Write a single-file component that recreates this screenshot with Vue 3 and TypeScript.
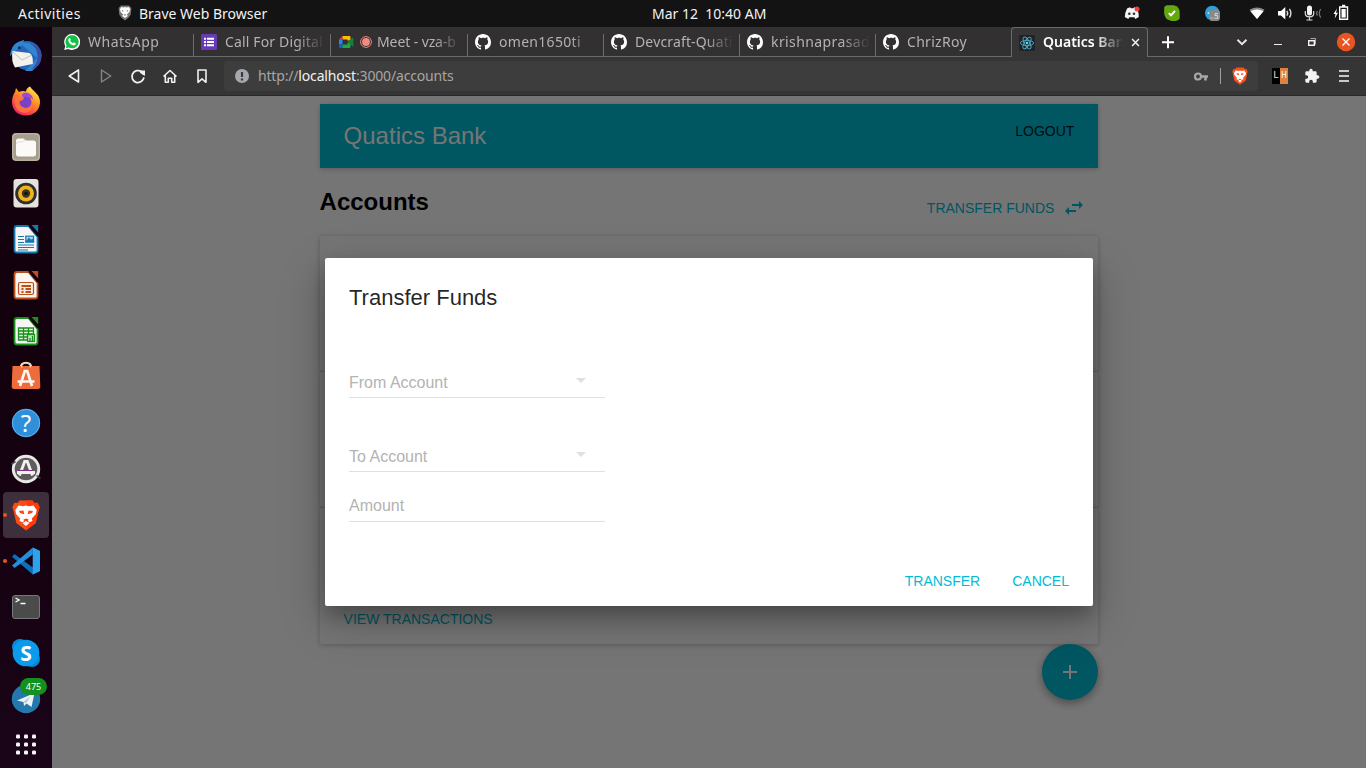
<script setup lang="ts">
interface Tab {
  title: string
  icon: 'whatsapp' | 'forms' | 'meet' | 'github'
  spacing: number
  recording?: boolean
}

const tabs: Tab[] = [
  { title: 'WhatsApp', icon: 'whatsapp', spacing: 0.5 },
  { title: 'Call For Digital', icon: 'forms', spacing: 0.15 },
  { title: 'Meet - vza-b', icon: 'meet', spacing: -0.1, recording: true },
  { title: 'omen1650ti', icon: 'github', spacing: 0.3 },
  { title: 'Devcraft-Quati', icon: 'github', spacing: 0.15 },
  { title: 'krishnaprasad', icon: 'github', spacing: 0.4 },
  { title: 'ChrizRoy', icon: 'github', spacing: 0.3 },
]

const documents = [
  { name: 'writer', color: '#1477b0', light: '#4aa3d6' },
  { name: 'impress', color: '#b8501c', light: '#d9743c' },
  { name: 'calc', color: '#18901a', light: '#3fb83a' },
]
</script>

<template>
  <div class="desktop">
    <header class="topbar">
      <span class="activities">Activities</span>
      <svg class="top-brave" viewBox="0 0 14 16" width="14" height="16">
        <path d="M3 .5h8l2.4 2.6-.7 6.7L10.200 13 7 15.600 3.800 13 1.300 9.800.6 3.100z" fill="#777" />
        <path d="M3.300 2l2.200.5L7 2l1.500.5L10.700 2l1.500 2.300-1 3L8.800 9.500l1 1.400L7 13l-2.800-2.100 1-1.400L2.800 7.300l-1-3z" fill="#fff" />
        <path d="M3.500 5l2 .7-.7 1zM10.500 5l-2 .7.7 1zM5.500 9L7 9.700 8.500 9 7 11z" fill="#555" />
      </svg>
      <span class="app-name">Brave Web Browser</span>
      <span class="clock">Mar 12&nbsp; 10:40 AM</span>
      <svg class="tray" viewBox="1120 0 240 27" width="240" height="27">
        <path d="M1127 8.500l3-1.200 1 1h2.200l1-1 2.800 1.200q2 4.500 1.800 8.500l-3.500 2-1-1.700h-5l-1 1.700-3.500-2q.2-4.500 2.200-8.500z" fill="#f4f4f4" />
        <circle cx="1129.300" cy="13.800" r="1.300" fill="#333" /><circle cx="1134" cy="13.800" r="1.300" fill="#333" />
        <circle cx="1137" cy="9" r="2.500" fill="#f04040" />
        <path d="M1167 5.200h7q5.500 1.500 5.700 7v6q-1 2.700-4 2.700h-4q-7-1-7.500-7.700V7.500q.5-2 2.800-2.300z" fill="#64a80f" />
        <path d="M1168.800 13.200l2.200 2.200 4-4.500" fill="none" stroke="#fff" stroke-width="1.900" />
        <circle cx="1212.300" cy="13" r="7.300" fill="#2d9fdb" />
        <path d="M1207 13l3-1.500v3z" fill="#e8f4fb" />
        <rect x="1209" y="10" width="11" height="11" rx="3" fill="#87898b" />
        <path d="M1210.500 18h1.200m.8 0h1.200M1218 13.600h-3v2h2.700v2.700h-3" stroke="#d5d5d5" fill="none" />
        <path d="M1249.500 9.800q7.500-4.800 15 0l-7.500 9.200z" fill="#888" />
        <path d="M1250.500 11.200q6.500-3.600 13 0l-6.500 7.800z" fill="#fff" />
        <path d="M1278 11h3l4.300-4v12.500l-4.300-4h-3z" fill="#fff" />
        <path d="M1286.800 10.800q1.800 2.400 0 4.800M1289.400 8.800q3 4.400 0 8.800" stroke="#d9d9d9" stroke-width="1.400" fill="none" />
        <rect x="1307" y="5.500" width="5" height="10" rx="2.500" fill="#f4f4f4" />
        <path d="M1305.300 11v2.500q0 3.400 4.200 3.400t4.200-3.400V11M1309.500 17v3M1306.500 20h6" stroke="#ddd" stroke-width="1.200" fill="none" />
        <path d="M1317.500 11q-1.800 2.300 0 4.600M1320.700 9q-2.800 4.300 0 8.600" stroke="#777" stroke-width="1.200" fill="none" />
        <path d="M1337 8.500l-3.500 5.500h2l-.8 4.500 3.300-5.800h-2z" fill="#fff" />
        <path d="M1339.700 7h7.800v12.300h-7.800zM1342 5.500h3.200" fill="none" stroke="#fff" stroke-width="1.400" />
        <rect x="1341.500" y="9" width="4.200" height="8.600" fill="#fff" />
      </svg>
    </header>

    <div class="workspace">
      <nav class="dock">
        <div class="dock-item">
          <svg viewBox="0 0 32 32">
            <circle cx="17" cy="16.500" r="14.500" fill="#2565b7" />
            <path d="M0 17Q1 6 8 3q4-1.600 6-2 0 2-1 2.500Q25 3 29 13q4 11-7 19h-7l12-13L12 6z" fill="#2f85cf" />
            <path d="M20 5q8 3 7.500 14-1 8-7 12 12-3 11-16-2-9-11.500-10z" fill="#3c4ba6" />
            <path d="M2.500 12l17 2q4 2.500 3.300 11L5 28.500Q1 23 2.500 12z" fill="#f3f1ed" />
            <path d="M3 13l9 8 10-5" fill="none" stroke="#c4c0ba" />
            <circle cx="9.300" cy="8.800" r="1.400" fill="#14294c" />
          </svg>
        </div>
        <div class="dock-item">
          <svg viewBox="0 0 32 32">
            <defs>
              <linearGradient id="fox" x1=".8" y1="0" x2=".2" y2="1">
                <stop offset="0" stop-color="#fff14d" /><stop offset=".4" stop-color="#ff9324" />
                <stop offset=".7" stop-color="#ff4b43" /><stop offset="1" stop-color="#ed1976" />
              </linearGradient>
            </defs>
            <path d="M20 1.500q2 3 5 5.500 5.500 5 5 11Q28.500 29.700 16 30.500 3.500 30 2 18q0-7 3-11l1-4 3 4q3-1.500 7-.5 0-3 4-5z" fill="url(#fox)" />
            <circle cx="15.500" cy="17" r="6" fill="#7942c9" />
            <path d="M12 9q4-3 8 0 3 2 3 6-1-2-3-2-4-3-8-1z" fill="#9c4bd7" />
            <path d="M5 9q3 .5 4 3h5l-1 3-4 1.500q0 5 6 6.500 6 0 8-5 0 9-8 10Q5 27 4.500 17z" fill="#ff7139" />
          </svg>
        </div>
        <div class="dock-item">
          <svg viewBox="0 0 32 32">
            <rect x="2" y="2" width="28" height="28" rx="4" fill="#a59e8c" />
            <rect x="2.800" y="2.800" width="26.400" height="26.400" rx="3.500" fill="none" stroke="#c2bcac" />
            <path d="M6 10q0-2.500 2.500-2.500h5L16 9.500h7.500q2.500 0 2.500 2.500v11q0 2.500-2.500 2.500h-15Q6 25.500 6 23z" fill="#fbfaf8" />
            <path d="M6.500 13q0-2 2-2H12l3-1.700" fill="none" stroke="#dedbd3" />
          </svg>
        </div>
        <div class="dock-item">
          <svg viewBox="0 0 32 32">
            <rect x="3.500" y="2" width="25" height="28.500" rx="3" fill="#e6e2dc" />
            <circle cx="16" cy="16.500" r="10.800" fill="#302e32" />
            <circle cx="16" cy="16.500" r="8" fill="#eeb41b" />
            <circle cx="16" cy="16.500" r="4.200" fill="#3c3422" />
            <circle cx="16" cy="16.500" r="1.800" fill="#111" />
          </svg>
        </div>
        <div v-for="doc in documents" :key="doc.name" class="dock-item">
          <svg viewBox="0 0 32 32">
            <path d="M7 3h11.500L27.500 14v13q0 2.500-2.500 2.500H7q-2.500 0-2.500-2.500V5.500Q4.500 3 7 3z" fill="#f7f6f5" :stroke="doc.color" stroke-width="1.800" />
            <path d="M19 2l9.500 11" stroke="#15010f" stroke-width="2.200" />
            <path d="M21.500 2h6.700v7.500z" :fill="doc.color" />
            <g v-if="doc.name === 'writer'" :stroke="doc.color" stroke-width="1.200">
              <path d="M8 13.500h6M8 16.500h6M8 19.500h6M8 22h16M8 24.500h16M8 27h10" />
              <rect x="15.800" y="13.200" width="7.800" height="6" fill="#a9d7f2" />
              <path d="M16.500 18.500l2.500-3 2 2 1.500-1 1 2z" :fill="doc.color" />
            </g>
            <g v-else-if="doc.name === 'impress'" :stroke="doc.color">
              <rect x="8.500" y="13.500" width="15" height="12" rx="1.500" fill="#fbeadf" stroke-width="1.200" />
              <path d="M11.500 17h9.500M11.500 20h2M15.500 20H21M11.500 23h2M15.500 23H21" stroke-width="1.900" />
            </g>
            <g v-else :stroke="doc.color" stroke-width="1.300">
              <path d="M8.500 13h15v12h-15zM8.500 16h15M8.500 19h15M8.500 22h15M13.500 13v12M18.500 13v12" fill="#e2f3df" />
              <rect x="17.500" y="19.500" width="7" height="7" fill="#bde4b7" />
              <path d="M20 26v-3M22.500 26v-5" />
            </g>
          </svg>
        </div>
        <div class="dock-item">
          <svg viewBox="0 0 32 32">
            <path d="M10.500 7q0-5.500 5.500-5.500T21.500 7" fill="none" stroke="#eadbb6" stroke-width="1.700" />
            <path d="M2.500 5h27l.8 20.500q0 2.500-2.500 2.500H4.200q-2.500 0-2.500-2.500z" fill="#ee6b3b" />
            <path d="M11.500 6.500q0-4.300 4.500-4.300t4.500 4.300" fill="none" stroke="#eadbb6" stroke-width="1.300" />
            <path d="M10 25l4.800-15h2.400L22 25M7.500 20.500h17" fill="none" stroke="#fff6f0" stroke-width="2.700" />
          </svg>
        </div>
        <div class="dock-item">
          <svg viewBox="0 0 32 32">
            <circle cx="16" cy="16" r="14.200" fill="#2f8fd8" />
            <circle cx="16" cy="16" r="13.600" fill="none" stroke="#62b2ec" />
            <text x="16" y="24.500" class="help-mark">?</text>
          </svg>
        </div>
        <div class="dock-item">
          <svg viewBox="0 0 32 32">
            <circle cx="16" cy="16" r="14.200" fill="#e8e8e8" />
            <circle cx="16" cy="16" r="11.300" fill="#5d5d5d" />
            <path d="M1.500 11l4-2.500M26.500 22.500l4 3" stroke="#444" stroke-width="1.500" />
            <path d="M9.500 22.500l5.200-14h2.600l5.200 14M7 19.500h18" fill="none" stroke="#f0f0f0" stroke-width="2.900" />
            <path d="M8 17.500h15" stroke="#7b2f7e" />
          </svg>
        </div>
        <div class="dock-item active">
          <i class="running"></i>
          <svg viewBox="0 0 32 32">
            <path d="M9.500 1.500h13l2 2.500 3-.3 2.200 4.600-1 2.700-3 13L16 31.500 6.300 24l-3-13-1-2.700 2.200-4.600 3 .3z" fill="#fb4c16" />
            <path d="M16 1.500h6.500l2 2.500 3-.3 2.200 4.600-1 2.700-3 13L16 31.500z" fill="#ff3c0a" />
            <path d="M8.500 6.500l4.500.8 3-.8 3 .8 4.500-.8 3.200 4.500-.8 4-4 4.500.5 2.500-3 1.200-1.400-1.200.5-1.500L16 19.500l-2.500 1 .5 1.500-1.400 1.200-3-1.200.5-2.500-4-4.500-.8-4z" fill="#fff" />
            <path d="M9 12l4.500-.5.8 3.800L10 14zM23 12l-4.500-.5-.8 3.800L22 14z" fill="#fb4614" />
            <path d="M16 22l3.500 2L16 27l-3.500-3z" fill="#fff" />
          </svg>
        </div>
        <div class="dock-item">
          <i class="running"></i>
          <svg viewBox="0 0 32 32">
            <path d="M22.800 2.500L30 6v20l-7.200 3.500L2 11.800 4.500 9l18.300 13.500z" fill="#0d6fba" />
            <path d="M22.800 2.500v7L4.500 23 2 20.500z" fill="#2490dc" />
            <path d="M22.800 2.500L30 6v20l-7.200 3.500z" fill="#2ea2ec" />
          </svg>
        </div>
        <div class="dock-item">
          <svg viewBox="0 0 32 32">
            <rect x="2.500" y="4.500" width="27" height="23" rx="2.500" fill="#4b4b4b" stroke="#777" />
            <path d="M5.500 7l3.600 2L5.500 11M10.500 12.500h5" fill="none" stroke="#fff" stroke-width="1.300" />
          </svg>
        </div>
        <div class="dock-item">
          <svg viewBox="0 0 32 32">
            <circle cx="10" cy="10" r="8" fill="#0a8ad8" /><circle cx="22" cy="22" r="8" fill="#0884d8" />
            <circle cx="16" cy="16" r="13.300" fill="#0b9bec" />
            <text x="16" y="23.500" class="skype-letter">S</text>
          </svg>
        </div>
        <div class="dock-item">
          <svg viewBox="0 0 32 32">
            <circle cx="16" cy="16" r="14.200" fill="#2478ae" />
            <path d="M7 17.500L24.500 10l-3 14-5-3.500-2.500 2.500-.5-4z" fill="#eef3f6" />
            <path d="M13.500 19l7-6-4.500 7z" fill="#abc8da" />
          </svg>
          <span class="badge">475</span>
        </div>
        <div class="dock-item">
          <svg viewBox="0 0 32 32" fill="#f4f2f4">
            <g v-for="row in 3" :key="row">
              <rect v-for="col in 3" :key="col" :x="col * 8 - 2" :y="row * 8 - 2.500" width="4" height="4" rx="1.200" />
            </g>
          </svg>
        </div>
      </nav>

      <main class="browser">
        <div class="tabstrip">
          <div v-for="tab in tabs" :key="tab.title" class="tab">
            <svg v-if="tab.icon === 'whatsapp'" viewBox="0 0 16 16" class="favicon">
              <path d="M.2 16L1.300 12A8 8 0 1 1 4.300 14.900z" fill="#fff" />
              <path d="M1.800 14.300l.8-2.800a6.600 6.600 0 1 1 2.200 2z" fill="#14c148" />
              <path d="M5 4.200q.9-.7 1.300.3l.5 1.200-.7 1q1 1.900 2.900 2.600l.8-1 1.900.9q.2 1.700-1.700 2.200Q5.800 11.200 4.300 6.700 4.200 5 5 4.200z" fill="#fff" />
            </svg>
            <svg v-else-if="tab.icon === 'forms'" viewBox="0 0 16 16" class="favicon">
              <rect width="16" height="16" rx="1" fill="#673ab7" />
              <path d="M3 4.800h2M6 4.800h7M3 8h2M6 8h7M3 11.200h2M6 11.200h7" stroke="#fff" stroke-width="2" />
            </svg>
            <svg v-else-if="tab.icon === 'meet'" viewBox="0 0 16 16" class="favicon">
              <path d="M4.500 2h7q1 0 1 1v3.500h-3V5.500h-5z" fill="#fbbc04" />
              <path d="M4.500 2v3.500H1z" fill="#ea4335" />
              <path d="M1 5.500h3.500v5H1z" fill="#2684fc" /><path d="M1 10.500h3.500V14H2q-1 0-1-1z" fill="#0066da" />
              <path d="M4.500 10.500h5V9l3-2.500V13q0 1-1 1h-7z" fill="#20a849" />
              <path d="M9.500 8l5-4.300q.9-.4.9.4v7.800q0 .8-.9.400z" fill="#16803a" />
            </svg>
            <svg v-else viewBox="0 0 16 16" class="favicon" fill="#fff">
              <path d="M8 0C3.580 0 0 3.580 0 8c0 3.540 2.290 6.530 5.470 7.590.4.070.55-.17.55-.38 0-.19-.01-.82-.01-1.490-2.010.37-2.530-.49-2.690-.94-.09-.23-.48-.94-.82-1.130-.28-.15-.68-.52-.01-.53.63-.01 1.080.58 1.230.82.72 1.210 1.870.87 2.330.66.070-.52.28-.87.51-1.070-1.780-.2-3.640-.89-3.640-3.950 0-.87.31-1.590.82-2.150-.08-.2-.36-1.020.08-2.120 0 0 .67-.21 2.200.82.64-.18 1.320-.27 2-.27s1.360.09 2 .27c1.530-1.040 2.200-.82 2.200-.82.44 1.100.16 1.920.08 2.120.51.56.82 1.270.82 2.150 0 3.070-1.870 3.750-3.650 3.950.29.25.54.73.54 1.480 0 1.070-.01 1.930-.01 2.200 0 .21.15.46.55.38A8.010 8.010 0 0 0 16 8c0-4.420-3.580-8-8-8z" />
            </svg>
            <svg v-if="tab.recording" class="recording" viewBox="0 0 12 12">
              <circle cx="6" cy="6" r="5.400" fill="none" stroke="#e98a80" /><circle cx="6" cy="6" r="3.900" fill="#f28b82" />
            </svg>
            <span class="tab-title" :style="{ letterSpacing: tab.spacing + 'px' }">{{ tab.title }}</span>
          </div>
          <div class="tab current">
            <svg viewBox="0 0 16 16" class="favicon">
              <rect width="16" height="16" rx="1" fill="#20232a" />
              <g fill="none" stroke="#4fa9c4" stroke-width=".9">
                <ellipse cx="8" cy="8" rx="6.600" ry="2.600" />
                <ellipse cx="8" cy="8" rx="6.600" ry="2.600" transform="rotate(60 8 8)" />
                <ellipse cx="8" cy="8" rx="6.600" ry="2.600" transform="rotate(120 8 8)" />
              </g>
              <circle cx="8" cy="8" r="1.300" fill="#61dafb" />
            </svg>
            <span class="tab-title">Quatics Ban</span>
            <svg class="close" viewBox="0 0 10 10"><path d="M1.200 1.200l7.600 7.600M8.800 1.200L1.200 8.800" stroke="#f2f2f2" stroke-width="1.700" /></svg>
          </div>
          <svg class="window-controls" viewBox="1148 27 218 29" width="218" height="29">
            <path d="M1162 42.200h12M1168 36.200v12" stroke="#fff" stroke-width="2" />
            <path d="M1237.500 39.800l4.500 4.300 4.500-4.300" fill="none" stroke="#e8e8e8" stroke-width="1.900" />
            <path d="M1274 44.500h8" stroke="#eee" />
            <path d="M1308.700 40.700h5.600v4.600h-5.600z" fill="none" stroke="#f2f2f2" stroke-width="1.400" />
            <path d="M1310.500 38.500h5v6" fill="none" stroke="#aaa" />
            <circle cx="1346" cy="42" r="9.200" fill="#e95420" />
            <path d="M1342.500 38.500l7 7M1349.500 38.500l-7 7" stroke="#fff" stroke-width="1.400" />
          </svg>
        </div>

        <div class="toolbar">
          <svg class="nav-icons" viewBox="52 57 172 38" width="172" height="38" fill="none" stroke="#f0f0f0" stroke-width="1.600" stroke-linejoin="round">
            <path d="M78.500 70v12l-9.300-6z" />
            <path d="M101.500 70v12l9.300-6z" stroke="#858585" stroke-width="1.400" />
            <path d="M141.600 71.800a6 6 0 1 0 2.300 5.500" stroke-width="1.800" /><path d="M140 70.500h5v5.200l-2.300-1-2.700-2z" fill="#f0f0f0" stroke="none" />
            <path d="M163.500 76.500l6.500-6 6.500 6M165.300 75.500v6.700h3v-4h3.400v4h3v-6.700" />
            <path d="M198 70h8v12.300l-4-3.500-4 3.500z" />
          </svg>
          <div class="address">
            <svg class="info" viewBox="0 0 14 14"><circle cx="7" cy="7" r="7" fill="#a5a9ad" /><path d="M7 3v5M7 9.500v2" stroke="#3b3b3b" stroke-width="2.200" /></svg>
            <span class="url">http://<b>localhost</b>:3000/accounts</span>
            <svg class="key" viewBox="0 0 14 9"><circle cx="4" cy="4.500" r="3" fill="none" stroke="#a8a8a8" stroke-width="2.200" /><path d="M7 4.500h7M11.500 4.500v4" stroke="#a8a8a8" stroke-width="2.600" /></svg>
            <i class="divider"></i>
            <svg class="shield" viewBox="0 0 16 18">
              <path d="M4.500.5h7L13 2l1.800.3.9 2.500-.4 1.200-1.500 7.500L8 17.700l-5.800-4.200L.7 6 .3 4.800l.9-2.500L3 2z" fill="#f4501c" />
              <path d="M3.800 3.500l2.700.5L8 3.500l1.500.5 2.700-.5L14 6l-.5 2.200-2.300 2.500.3 1.600-1.600.7-1-.7L8 11.500l-.9.800-1 .7-1.600-.7.3-1.600L2.500 8.200 2 6zM8 12.700l2 1-2 1.800-2-1.800z" fill="#fff" />
              <path d="M4.500 6.500L6.700 6.300l.3 2L5.200 7.800zM11.500 6.500l-2.200-.2-.3 2 1.800-.5z" fill="#f4501c" />
            </svg>
          </div>
          <div class="lh"><span>L</span><span>H</span></div>
          <svg class="puzzle" viewBox="0 0 24 24" fill="#f3f3f3"><path d="M20.500 11H19V7c0-1.100-.9-2-2-2h-4V3.500C13 2.120 11.880 1 10.500 1S8 2.120 8 3.500V5H4c-1.100 0-1.990.9-1.990 2v3.800H3.500c1.490 0 2.700 1.210 2.700 2.700s-1.210 2.700-2.700 2.700H2V20c0 1.100.9 2 2 2h3.800v-1.500c0-1.490 1.210-2.700 2.700-2.700s2.700 1.210 2.700 2.700V22H17c1.100 0 2-.9 2-2v-4h1.500c1.380 0 2.500-1.120 2.500-2.500S21.880 11 20.500 11z" /></svg>
          <svg class="burger" viewBox="0 0 10 12"><path d="M0 1h10M0 6h10M0 11h10" stroke="#c9c9c9" stroke-width="1.800" /></svg>
        </div>

        <section class="page">
          <div class="container">
            <div class="appbar">
              <h1>Quatics Bank</h1>
              <button class="flat logout">Logout</button>
            </div>
            <div class="heading">
              <h2>Accounts</h2>
              <button class="flat transfer-link">
                Transfer Funds
                <svg viewBox="0 0 24 24" width="24" height="24"><path d="M6.990 11L3 15l3.990 4v-3H14v-2H6.990v-3zM21 9l-3.990-4v3H10v2h7.010v3L21 9z" fill="#00bcd4" /></svg>
              </button>
            </div>
            <div class="card"></div>
            <div class="card"></div>
            <div class="card last"><button class="flat">View Transactions</button></div>
            <button class="fab"><svg viewBox="0 0 24 24" width="24" height="24"><path d="M19 13h-6v6h-2v-6H5v-2h6V5h2v6h6v2z" fill="#fff" /></svg></button>
          </div>

          <div class="overlay">
            <div class="dialog">
              <h3>Transfer Funds</h3>
              <div class="field from"><span>From Account</span><i class="caret"></i></div>
              <div class="field to"><span>To Account</span><i class="caret"></i></div>
              <div class="field amount"><span>Amount</span></div>
              <div class="actions">
                <button class="flat">Transfer</button>
                <button class="flat">Cancel</button>
              </div>
            </div>
          </div>
        </section>
      </main>
    </div>
  </div>
</template>

<style>
html, body { margin: 0; overflow: hidden; }
</style>

<style scoped>
* { box-sizing: border-box; }
.desktop { width: 1366px; height: 768px; display: flex; flex-direction: column; overflow: hidden; font-family: "Noto Sans", "Open Sans", sans-serif; }
svg { display: block; flex: none; }
span { white-space: pre; }

.topbar { height: 27px; flex: none; display: grid; grid-template-columns: 118px 21px 513px 468px 240px; align-items: center; background: #131313; color: #f2f2f2; font-size: 14px; line-height: 26px; }
.activities { padding-left: 18px; letter-spacing: .45px; }
.top-brave { margin-top: -2px; }

.workspace { flex: 1; display: flex; min-height: 0; }
.dock { width: 52px; flex: none; padding-top: 5px; background: linear-gradient(#12010e, #15010f 60%, #1a0418); }
.dock-item { width: 46px; height: 46px; margin-left: 3px; border-radius: 4px; display: flex; align-items: center; justify-content: center; position: relative; }
.dock-item svg { width: 32px; height: 32px; }
.dock-item.active { background: #3d2f3b; }
.running { position: absolute; left: 0; top: 21px; width: 4px; height: 4px; border-radius: 50%; background: #e95420; }
.badge { position: absolute; left: 17px; top: 2px; width: 27px; height: 17px; border-radius: 9px; background: #12911f; color: #fff; font-size: 9px; line-height: 17px; text-align: center; }
.help-mark { font: 24px "Noto Sans", sans-serif; fill: #fff; text-anchor: middle; }
.skype-letter { font: bold 21px "Noto Sans", sans-serif; fill: #fff; text-anchor: middle; }

.browser { flex: 1; display: flex; flex-direction: column; min-width: 0; }
.tabstrip { height: 30px; flex: none; display: flex; background: #333031; border-bottom: 1px solid #696b6b; padding-left: 5px; }
.tab { width: 136px; flex: none; display: flex; align-items: center; padding: 0 6px 0 7px; position: relative; color: #b3b3b3; font-size: 14px; }
.tab:nth-child(-n+3) { width: 137px; }
.tab:not(.current)::after { content: ""; position: absolute; right: 0; top: 7px; bottom: 0; width: 1px; background: #6d6d6d; }
.tab:nth-child(7)::after { display: none; }
.favicon { width: 16px; height: 16px; }
.recording { width: 12px; height: 12px; margin-left: 6px; }
.tab-title { flex: 1; min-width: 0; margin-left: 8px; overflow: hidden; -webkit-mask-image: linear-gradient(90deg, #000 calc(100% - 28px), transparent); mask-image: linear-gradient(90deg, #000 calc(100% - 28px), transparent); line-height: 22px; }
.recording + .tab-title { margin-left: 5px; }
.tab.current { width: 137px; height: 30px; margin: 0 0 -1px -1px; background: #353535; border: 1px solid #696b6b; border-bottom: 0; border-radius: 4px 4px 0 0; color: #fff; font-weight: 600; }
.current .tab-title { line-height: 20px; padding-bottom: 2px; }
.close { width: 9px; height: 9px; margin: 0 1px 0 8px; }
.window-controls { margin-left: auto; }

.toolbar { height: 39px; flex: none; display: flex; align-items: center; background: #353535; border-bottom: 1px solid #292929; }
.address { width: 1034px; height: 30px; display: flex; align-items: center; padding: 0 10px 0 11px; background: #3d3d3d; border-radius: 4px; }
.info { width: 14px; height: 14px; }
.url { margin-left: 9px; color: #a6a6a6; font-size: 14px; line-height: 20px; letter-spacing: -.17px; }
.url b { color: #f2f2f2; font-weight: 400; }
.key { width: 14px; height: 9px; margin-left: auto; margin-right: 12px; }
.divider { width: 1px; height: 16px; background: #a0a0a0; margin-right: 11px; }
.shield { width: 16px; height: 18px; }
.lh { display: flex; width: 16px; height: 16px; margin-left: 14px; font: 10px/16px "Liberation Mono", monospace; }
.lh span { width: 8px; text-align: center; background: #000; color: #ddd; }
.lh span + span { background: #e08142; color: #eee; }
.puzzle { width: 16px; height: 16px; margin-left: 16px; }
.burger { width: 10px; height: 12px; margin-left: 19px; }

.page { flex: 1; position: relative; min-height: 0; background: #fff; font-family: "Liberation Sans", Arial, sans-serif; overflow: hidden; }
.container { width: 778.800px; margin: 8px auto 0; }
h1, h2, h3 { margin: 0; }
button { border: 0; padding: 0; background: none; font-family: inherit; }
.flat { height: 36px; font-size: 14px; line-height: 36px; text-transform: uppercase; color: #00bcd4; }
.appbar { height: 64px; display: flex; justify-content: space-between; padding: 0 24px; background: #00bcd4; box-shadow: 0 1px 6px rgba(0,0,0,.12), 0 1px 4px rgba(0,0,0,.12); }
.appbar h1 { font-size: 24px; font-weight: 400; line-height: 64px; color: #fff; }
.logout { margin-top: 9px; color: rgba(0,0,0,.87); }
.heading { height: 68px; display: flex; justify-content: space-between; }
.heading h2 { font-size: 24px; line-height: 28px; margin-top: 20px; }
.transfer-link { display: flex; align-items: center; gap: 8px; margin: 22px 12px 0 0; }
.card { height: 135px; margin-bottom: 1px; display: flex; align-items: flex-end; padding: 0 24px 7px; border-radius: 2px; background: #fff; box-shadow: 0 1px 6px rgba(0,0,0,.12), 0 1px 4px rgba(0,0,0,.12); }
.card.last { height: 136px; margin-bottom: 0; }
.fab { display: flex; align-items: center; justify-content: center; width: 56px; height: 56px; margin-left: auto; border-radius: 50%; background: #00bcd4; box-shadow: 0 3px 10px rgba(0,0,0,.16), 0 3px 10px rgba(0,0,0,.23); }

.overlay { position: absolute; inset: 0; display: flex; justify-content: center; align-items: flex-start; padding-top: 162px; background: rgba(0,0,0,.54); }
.dialog { width: 768px; height: 348px; display: flex; flex-direction: column; padding: 24px; border-radius: 2px; background: #fff; box-shadow: 0 14px 45px rgba(0,0,0,.25), 0 10px 18px rgba(0,0,0,.22); }
.dialog h3 { font-size: 22px; font-weight: 400; line-height: 32px; color: rgba(0,0,0,.87); }
.field { width: 256px; display: flex; align-items: center; justify-content: space-between; border-bottom: 1px solid #e0e0e0; color: #b3b3b3; font-size: 16px; line-height: 24px; }
.from, .to { height: 28px; padding-bottom: 1px; }
.from { margin-top: 56px; }
.to { margin-top: 46px; }
.amount { margin-top: 22px; padding-bottom: 3px; }
.caret { width: 0; height: 0; margin: -5px 19px 0 0; border: 5px solid transparent; border-top-color: #e0e0e0; border-bottom: 0; }
.actions { display: flex; justify-content: flex-end; gap: 32px; margin: auto 0 -17px; }
</style>
